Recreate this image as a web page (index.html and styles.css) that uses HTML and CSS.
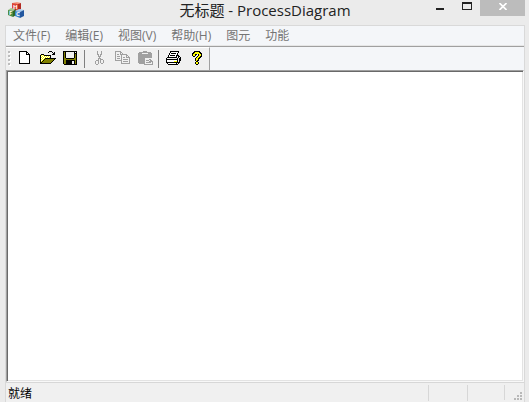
FILE: index.html
```html
<!DOCTYPE html>
<html lang="zh-CN">
<head>
<meta charset="utf-8">
<title>无标题 - ProcessDiagram</title>
<link rel="stylesheet" href="styles.css">
</head>
<body>
<div class="window">
  <header class="titlebar">
    <svg class="app-icon" viewBox="0 0 16 16" aria-hidden="true">
      <path fill="#f59a84" d="M4 1l5-1 4 1-4 2z"/>
      <path fill="#dc4434" d="M4 1l6 1v7l-6-1z"/>
      <path fill="#b22a22" d="M10 2l3-1v6l-3 2z"/>
      <path fill="#a4c790" d="M0 8l3-2 4 1-2 2z"/>
      <path fill="#4c8c40" d="M0 8l5 1v6l-5-2z"/>
      <path fill="#2c682a" d="M5 9l3-2v6l-3 2z"/>
      <path fill="#a3cbef" d="M7 9l4-2 5 1-4 2z"/>
      <path fill="#3f83c8" d="M7 9l5 1v6l-5-2z"/>
      <path fill="#22579f" d="M12 10l4-2v6l-4 2z"/>
      <g class="cube-letters"><text x="5" y="7">H</text><text x="1" y="13">F</text><text x="8" y="14">C</text></g>
    </svg>
    <h1 class="title">无标题 - ProcessDiagram</h1>
    <div class="controls">
      <button class="control" aria-label="最小化"><svg viewBox="0 0 9 8"><path fill="#222" d="M1 6h8v2H1z"/></svg></button>
      <button class="control" aria-label="最大化"><svg class="max" viewBox="0 0 10 8"><path fill="#222" fill-rule="evenodd" d="M0 0h10v8H0zM1 2v5h8V2z"/></svg></button>
      <button class="control close" aria-label="关闭"><svg class="x" viewBox="0 0 8 7"><path stroke="#fff" stroke-width="1.6" d="M0.500 0l7 7M7.500 0l-7 7"/></svg></button>
    </div>
  </header>
  <main class="frame">
    <nav class="menubar">
      <button class="menu">文件(F)</button>
      <button class="menu">编辑(E)</button>
      <button class="menu">视图(V)</button>
      <button class="menu">帮助(H)</button>
      <button class="menu">图元</button>
      <button class="menu">功能</button>
    </nav>
    <div class="rebar">
      <div class="toolbar" role="toolbar">
        <svg class="grip" viewBox="0 0 7 22" aria-hidden="true"><path fill="#fff" d="M3 4h2v2H3zM3 8h2v2H3zM3 12h2v2H3zM3 16h2v2H3z"/><path fill="#bdbdbd" d="M2 3h2v2H2zM2 7h2v2H2zM2 11h2v2H2zM2 15h2v2H2z"/></svg>
        <button class="tool" aria-label="新建"><svg viewBox="0 -0.5 16 16"><path stroke="#fff" d="M3 1h6M3 2h6M10 2h1M3 3h6M3 4h9M3 5h9M3 6h9M3 7h9M3 8h9M3 9h9M3 10h9M3 11h9"/><path stroke="#000" d="M2 0h8M2 1h1M9 1h2M2 2h1M9 2h1M11 2h1M2 3h1M9 3h4M2 4h1M12 4h1M2 5h1M12 5h1M2 6h1M12 6h1M2 7h1M12 7h1M2 8h1M12 8h1M2 9h1M12 9h1M2 10h1M12 10h1M2 11h1M12 11h1M2 12h11"/></svg></button>
        <button class="tool" aria-label="打开"><svg viewBox="0 -0.5 16 16"><path stroke="#ff0" d="M1 4h3M1 5h9M1 6h9M1 7h4M1 8h3M1 9h2M1 10h1"/><path stroke="#fff" d="M2 4h1M1 5h1M3 5h1M5 5h1M7 5h1M9 5h1M2 6h1M4 6h1M6 6h1M8 6h1M1 7h1M3 7h1M2 8h1M1 9h1"/><path stroke="#808000" d="M5 8h9M4 9h9M3 10h9M2 11h9"/><path stroke="#000" d="M9 0h3M8 1h1M12 1h1M14 1h1M13 2h2M1 3h3M12 3h3M0 4h1M4 4h7M0 5h1M10 5h1M0 6h1M10 6h1M0 7h1M5 7h11M0 8h1M4 8h1M14 8h1M0 9h1M3 9h1M13 9h1M0 10h1M2 10h1M12 10h1M0 11h2M11 11h1M0 12h11"/></svg></button>
        <button class="tool" aria-label="保存"><svg viewBox="0 -0.5 16 16"><path stroke="#000" d="M0 0h14M0 1h14M0 2h14M0 3h14M0 4h14M0 5h14M0 6h14M0 7h14M0 8h14M0 9h14M0 10h14M0 11h14M0 12h14M1 13h13"/><path stroke="#808000" d="M1 1h1M1 2h1M1 3h1M12 3h1M1 4h1M12 4h1M1 5h1M12 5h1M1 6h1M12 6h1M1 7h2M11 7h2M1 8h12M1 9h2M12 9h1M1 10h2M12 10h1M1 11h2M12 11h1M1 12h2M12 12h1"/><path stroke="#f0f0f0" d="M3 1h8M12 1h1M3 2h8M3 3h8M3 4h8M3 5h8M3 6h8M9 10h2M9 11h2M9 12h2"/></svg></button>
        <span class="sep"></span>
        <button class="tool" aria-label="剪切" disabled><svg viewBox="0 -0.5 16 16"><path stroke="#a0a0a0" d="M6 0h1M10 0h1M6 1h1M10 1h1M6 2h1M10 2h1M6 3h2M9 3h2M7 4h1M9 4h1M7 5h3M8 6h1M7 7h3M7 8h1M9 8h3M5 9h3M9 9h1M12 9h1M4 10h1M7 10h1M9 10h1M12 10h1M4 11h1M7 11h1M9 11h1M12 11h1M4 12h1M7 12h1M10 12h2M5 13h2"/></svg></button>
        <button class="tool" aria-label="复制" disabled><svg viewBox="0 -0.5 16 16"><path stroke="#a0a0a0" d="M1 0h6M1 1h1M6 1h2M1 2h1M6 2h1M8 2h1M1 3h1M3 3h2M6 3h7M1 4h1M7 4h1M12 4h2M1 5h1M3 5h3M7 5h1M12 5h1M14 5h1M1 6h1M7 6h1M9 6h2M12 6h4M1 7h1M3 7h3M7 7h1M15 7h1M1 8h1M7 8h1M9 8h5M15 8h1M1 9h7M15 9h1M7 10h1M9 10h5M15 10h1M7 11h1M15 11h1M7 12h9"/></svg></button>
        <button class="tool" aria-label="粘贴" disabled><svg viewBox="0 -0.5 16 16"><path stroke="#a0a0a0" d="M6 0h4M2 1h12M1 2h4M11 2h4M1 3h14M1 4h14M1 5h14M1 6h14M1 7h7M1 8h7M12 8h2M1 9h7M9 9h3M13 9h2M1 10h7M12 10h4M1 11h7M9 11h5M15 11h1M2 12h6M15 12h1M7 13h9"/></svg></button>
        <span class="sep"></span>
        <button class="tool" aria-label="打印"><svg viewBox="0 -0.5 16 16"><path stroke="#fff" d="M6 1h8M5 2h8M5 3h8M4 4h8M4 5h8M3 6h11M2 8h11M2 9h11M2 10h11M3 12h9"/><path stroke="#ff0" d="M9 10h3"/><path stroke="#000" d="M5 0h9M5 1h1M13 1h1M4 2h1M6 2h5M12 2h1M4 3h1M12 3h1M3 4h1M5 4h5M11 4h3M3 5h1M11 5h1M13 5h2M2 6h10M13 6h1M15 6h1M1 7h1M12 7h1M14 7h2M1 8h12M14 8h2M1 9h1M12 9h1M14 9h2M1 10h1M12 10h1M14 10h1M1 11h14M2 12h1M11 12h1M13 12h1M3 13h10"/></svg></button>
        <button class="tool" aria-label="关于"><svg viewBox="0 -0.5 16 16"><path stroke="#000" d="M6 0h6M5 1h8M4 2h10M4 3h5M10 3h4M4 4h4M10 4h4M5 5h2M9 5h5M8 6h5M7 7h5M7 8h4M7 9h4M8 10h2M7 11h4M7 12h4M8 13h2"/><path stroke="#ff0" d="M7 1h4M6 2h6M5 3h2M11 3h2M5 4h2M11 4h2M10 5h2M9 6h2M8 7h2M8 8h2M8 9h1M8 11h2M8 12h2"/></svg></button>
      </div>
    </div>
    <section class="document" aria-label="文档"></section>
    <footer class="statusbar">
      <span class="message">就绪</span>
      <span class="pane"></span>
      <span class="pane"></span>
      <span class="pane last"><svg class="sizer" viewBox="0 0 8 8"><path fill="#b8b8b8" d="M6 0h2v2H6zM3 3h2v2H3zM6 3h2v2H6zM0 6h2v2H0zM3 6h2v2H3zM6 6h2v2H6z"/></svg></span>
    </footer>
  </main>
</div>
</body>
</html>
```
FILE: styles.css
```css
* {
  box-sizing: border-box;
}

body {
  margin: 0;
  font-family: "Open Sans", "Noto Sans CJK SC", sans-serif;
  font-size: 12px;
  background: #ebebeb;
}

button {
  margin: 0;
  padding: 0;
  border: 0;
  background: none;
  font: inherit;
  color: inherit;
}

svg {
  display: block;
}

.window {
  display: flex;
  flex-direction: column;
  height: 100vh;
  padding: 0 4px 0 5px;
}

.titlebar {
  display: grid;
  grid-template-columns: 1fr auto 1fr;
  align-items: start;
  height: 25px;
  flex: none;
}

.app-icon {
  width: 16px;
  height: 16px;
  margin: 2px 0 0 3px;
}

.cube-letters {
  fill: #fff;
  font-size: 6px;
  font-weight: bold;
}

.title {
  margin: 0;
  font-size: 15px;
  font-weight: 400;
  line-height: 20px;
  color: #222;
}

.controls {
  display: flex;
  justify-content: flex-end;
}

.control {
  display: flex;
  justify-content: center;
  width: 27px;
  height: 16px;
  padding-top: 2px;
}

.control svg {
  width: 9px;
  height: 8px;
}

.control .max {
  width: 10px;
}

.close {
  width: 45px;
  padding-top: 3px;
  background: #bcbcbc;
}

.close .x {
  width: 8px;
  height: 7px;
}

.frame {
  display: flex;
  flex-direction: column;
  flex: 1;
  border: 1px solid #d9d9d9;
  border-bottom: 0;
  background: #f0f0f0;
}

.menubar {
  display: flex;
  gap: 15px;
  height: 20px;
  padding-left: 7px;
  background: #f4f6f9;
  border-bottom: 1px solid #e6e6e6;
}

.menu {
  line-height: 19px;
  color: #747474;
}

.rebar {
  display: flex;
  height: 24px;
  border-top: 1px solid #a0a0a0;
  background: #f4f6f9;
}

.toolbar {
  display: flex;
  padding-right: 2px;
  border-top: 1px solid #fff;
  border-right: 1px solid #a0a0a0;
  background: #f0f0f0;
}

.grip {
  width: 7px;
  height: 22px;
}

.tool {
  width: 23px;
  padding: 0 3px 0 4px;
}

.tool svg {
  width: 16px;
  height: 16px;
  shape-rendering: crispEdges;
}

.sep {
  width: 5px;
  padding: 2px;
  background: #808080 content-box;
}

.document {
  flex: 1;
  border: 1px solid;
  border-color: #a0a0a0 #f8f8f8 #f8f8f8 #a0a0a0;
  box-shadow: inset 1px 1px #696969, inset -1px -1px #e3e3e3;
  background: #fff;
}

.statusbar {
  display: flex;
  height: 20px;
  padding-top: 2px;
  border-top: 1px solid #d7d7d7;
}

.message {
  flex: 1;
  padding-left: 2px;
  line-height: 18px;
  color: #000;
}

.pane {
  width: 39px;
  height: 16px;
  border-left: 1px solid #d7d7d7;
}

.pane + .pane {
  width: 37px;
}

.pane.last {
  display: flex;
  align-items: flex-end;
  justify-content: flex-end;
  width: 20px;
  height: 15px;
  padding-right: 2px;
}

.sizer {
  width: 8px;
  height: 8px;
}
```
